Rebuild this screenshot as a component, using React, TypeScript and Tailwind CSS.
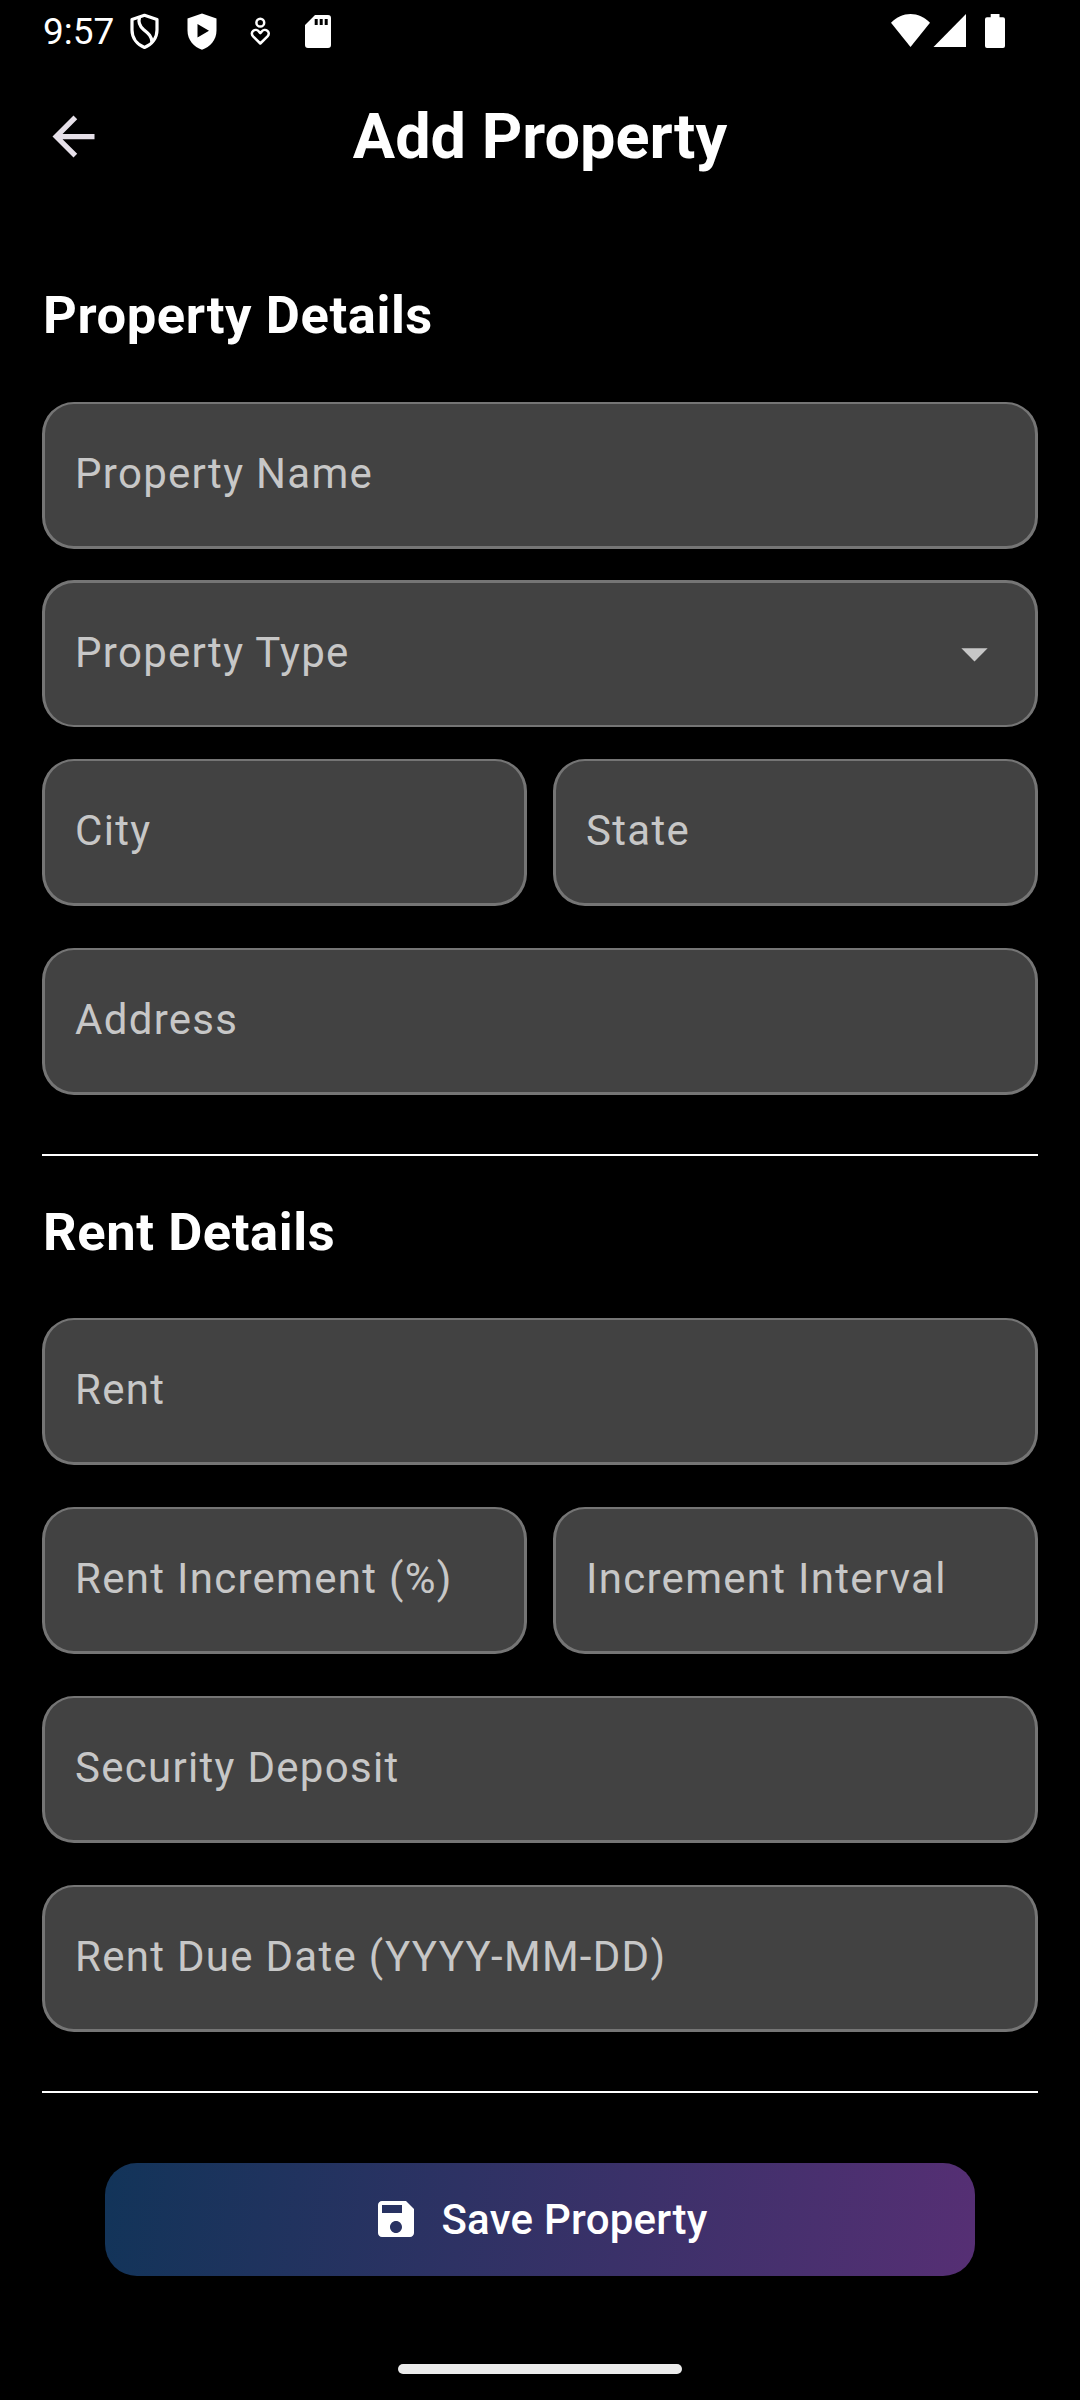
import type { ReactNode } from "react";

function Field({ label, edge = "border-t-2 border-b-[3px]", children }: { label: string; edge?: string; children?: ReactNode }) {
  return (
    <div className={`flex h-[147px] w-full items-center justify-between rounded-[32px] border-x-[3px] border-[#757575] bg-[#424242] pr-[29px] pb-[3px] pl-[30px] ${edge}`}>
      <span className="text-[42px] leading-[60px] tracking-[1.29px] whitespace-nowrap text-[#c7c7c7]">{label}</span>
      {children}
    </div>
  );
}

function Heading({ children }: { children: ReactNode }) {
  return <h2 className="pt-px pl-px text-[52.5px] leading-[64px] font-bold tracking-[0.58px] whitespace-nowrap">{children}</h2>;
}

function StatusBar() {
  return (
    <div className="flex h-[63px] items-start">
      <span className="mt-[10px] ml-[43px] w-[87px] text-[37px] leading-[44px]">9:57</span>
      <svg className="mt-[13px] h-[37px] w-[30px]" viewBox="0 0 30 37" fill="none" stroke="white" strokeWidth="3.2" strokeLinejoin="round">
        <path d="M14.5 2.3 2 6.5V17c0 8 5 14.500 12.500 17.500C22 31.500 27 25 27 17V6.500Z" />
        <path d="M9.500 4.500c-1.500 5 0 8.500 4 12 5 4 8.500 7 8.500 13" />
      </svg>
      <svg className="mt-[13px] ml-[27px] h-[37px] w-[30px]" viewBox="0 0 30 37" fill="white">
        <path fillRule="evenodd" d="M15 .5.500 5.500v12C.500 27 7 34 15 36.800 23 34 29.500 27 29.500 17.500v-12ZM10.500 11v13.500l11.500-6.700Z" />
      </svg>
      <svg className="mt-[17px] ml-[33px] h-[30px] w-[21px]" viewBox="0 0 21 30" fill="none" stroke="white" strokeWidth="2.5">
        <circle cx="10.300" cy="5.700" r="3.900" />
        <path strokeLinejoin="round" d="m10.300 26.500-7.200-7.200c-4-4.500 2.600-9 6-4.500l1.200 1.300 1.200-1.300c3.400-4.500 10 0 6 4.500Z" />
      </svg>
      <svg className="mt-[15px] ml-[34px] h-[33px] w-[26px]" viewBox="0 0 26 33" fill="white">
        <path fillRule="evenodd" d="M10 0h13a3 3 0 0 1 3 3v27a3 3 0 0 1-3 3H3a3 3 0 0 1-3-3V10ZM9.700 4v6h3V4Zm5 0v6h3V4Zm5 0v6h3V4Z" />
      </svg>
      <svg className="mt-[14px] ml-auto h-[33px] w-[39px]" viewBox="0 0 39 33" fill="white">
        <path d="M0 8.800C11-2.900 28-2.900 39 8.800L19.500 33Z" />
      </svg>
      <svg className="mt-[14px] ml-[3px] h-[33px] w-[33px]" viewBox="0 0 33 33" fill="white">
        <path d="M33 0v33H.500Z" />
      </svg>
      <svg className="mt-[14px] mr-[75px] ml-[19px] h-[34px] w-[20px]" viewBox="0 0 20 34" fill="white">
        <path d="M5.700 0h8.800v3.300H18a2 2 0 0 1 2 2V32a2 2 0 0 1-2 2H2a2 2 0 0 1-2-2V5.300a2 2 0 0 1 2-2h3.700Z" />
      </svg>
    </div>
  );
}

export default function App() {
  return (
    <div className="flex h-[2400px] w-[1080px] flex-col overflow-hidden bg-black font-['Roboto',sans-serif] text-white">
      <StatusBar />
      <header className="grid h-[147px] grid-cols-[105px_1fr_105px] items-center">
        <button className="ml-[42px] h-[63px] w-[63px]" aria-label="Back">
          <svg className="h-[63px] w-[63px]" viewBox="0 0 24 24" fill="#e6e0e9">
            <path d="M20 11H7.830l5.590-5.590L12 4l-8 8 8 8 1.410-1.410L7.830 13H20z" />
          </svg>
        </button>
        <h1 className="text-center text-[63px] leading-[76px] font-bold">Add Property</h1>
      </header>
      <main className="flex flex-col px-[42px] pt-[72px]">
        <Heading>Property Details</Heading>
        <div className="mt-[55px] flex flex-col">
          <Field label="Property Name" />
          <div className="mt-[31px] flex">
            <Field label="Property Type" edge="border-t-[3px] border-b-2">
              <svg className="mt-[2px] h-[63px] w-[63px]" viewBox="0 0 24 24" fill="#c7c7c7">
                <path d="m7 10 5 5 5-5z" />
              </svg>
            </Field>
          </div>
          <div className="mt-[32px] grid grid-cols-2 gap-[26px]">
            <Field label="City" />
            <Field label="State" />
          </div>
          <div className="mt-[42px] flex">
            <Field label="Address" />
          </div>
        </div>
        <hr className="mt-[59px] border-t-2 border-white" />
        <div className="mt-[43px]">
          <Heading>Rent Details</Heading>
        </div>
        <div className="mt-[54px] flex flex-col gap-[42px]">
          <Field label="Rent" />
          <div className="grid grid-cols-2 gap-[26px]">
            <Field label="Rent Increment (%)" />
            <Field label="Increment Interval" />
          </div>
          <Field label="Security Deposit" />
          <Field label="Rent Due Date (YYYY-MM-DD)" />
        </div>
        <hr className="mt-[59px] border-t-2 border-white" />
        <button className="mx-[63px] mt-[70px] flex h-[113px] items-center justify-center gap-[21px] rounded-[32px] bg-[linear-gradient(97.4deg,#123459,#562f74)]">
          <svg className="mb-[2px] h-[48px] w-[48px]" viewBox="0 0 24 24" fill="white">
            <path d="M17 3H5c-1.110 0-2 .9-2 2v14c0 1.100.890 2 2 2h14c1.100 0 2-.9 2-2V7l-4-4zm-5 16c-1.660 0-3-1.340-3-3s1.340-3 3-3 3 1.340 3 3-1.340 3-3 3zm3-10H5V5h10v4z" />
          </svg>
          <span className="text-[42px] leading-[60px] font-medium tracking-[0.26px]">Save Property</span>
        </button>
      </main>
      <div className="mt-auto mb-[26px] h-[10px] w-[284px] self-center rounded-full bg-[#ebebeb]" />
    </div>
  );
}
